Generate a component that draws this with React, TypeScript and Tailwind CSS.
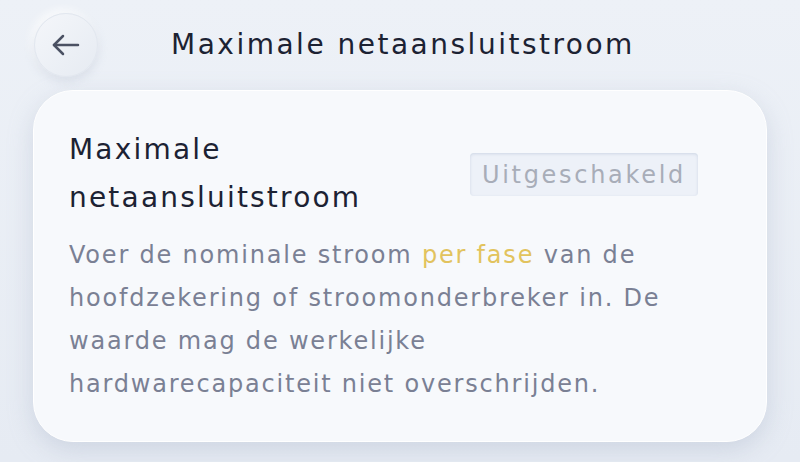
import React from "react";

export default function App() {
  return (
    <div
      className="w-[800px] h-[462px] overflow-hidden bg-gradient-to-b from-[#edf1f7] to-[#e6ebf3] relative"
      style={{ fontFamily: "'DejaVu Sans', 'Noto Sans', sans-serif" }}
    >
      <div className="flex items-center h-[90px] pl-[34px]">
        <button className="w-[64px] h-[64px] rounded-full bg-gradient-to-br from-[#f4f6fa] to-[#e6ebf2] border border-[#e2e7ef] shadow-[0_4px_10px_rgba(170,180,200,0.3),-3px_-3px_8px_rgba(255,255,255,0.9)] flex items-center justify-center -mt-[1px]">
          <svg width="36" height="36" viewBox="0 0 24 24" fill="none" stroke="#4b5163" strokeWidth="1.7" strokeLinecap="round" strokeLinejoin="round">
            <path d="M20 12H4" />
            <path d="M10 6l-6 6 6 6" />
          </svg>
        </button>
        <h1 className="ml-[73px] text-[28px] tracking-[2.5px] font-normal text-[#1c2233] whitespace-nowrap">Maximale netaansluitstroom</h1>
      </div>
      <div className="mx-[33px] mt-0 h-[352px] rounded-[40px] bg-[#f7f9fc] border border-white shadow-[0_8px_24px_rgba(160,172,195,0.35)] px-[35px] pt-[35px]">
        <div className="flex justify-between items-start">
          <h2 className="text-[28px] tracking-[2.2px] leading-[48px] font-normal text-[#1c2233]">
            Maximale
            <br />
            netaansluitstroom
          </h2>
          <div className="mt-[27px] mr-[33px] px-[12px] h-[43px] flex items-center rounded-[4px] bg-[#edf1f8] shadow-[inset_0_1px_3px_rgba(150,165,195,0.35)] text-[24px] tracking-[2.7px] text-[#a8adb8] whitespace-nowrap">
            Uitgeschakeld
          </div>
        </div>
        <p className="mt-[12px] text-[24px] tracking-[1.8px] leading-[43px] text-[#7a8094] whitespace-nowrap">
          Voer de nominale stroom <span className="text-[#e2c35e]">per fase</span> van de
          <br />
          hoofdzekering of stroomonderbreker in. De
          <br />
          waarde mag de werkelijke
          <br />
          hardwarecapaciteit niet overschrijden.
        </p>
      </div>
    </div>
  );
}
